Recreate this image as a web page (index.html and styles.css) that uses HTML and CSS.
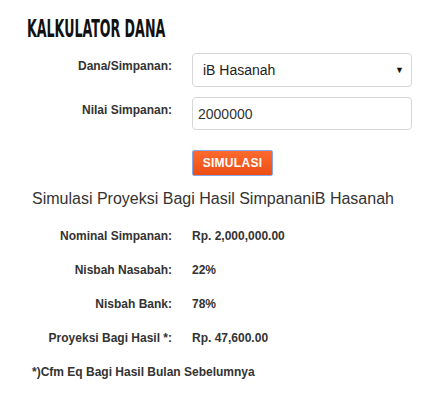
FILE: index.html
```html
<!DOCTYPE html>
<html lang="en">
<head>
  <meta charset="UTF-8">
  <title>Kalkulator Dana</title>
  <link rel="stylesheet" href="styles.css">
</head>
<body>

  <div class="kalkulator">
    <h2 class="judul"><span>KALKULATOR DANA</span></h2>

    <div class="form">
      <div class="form-row">
        <label class="form-label">Dana/Simpanan:</label>
        <div class="select-box">
          <span>iB Hasanah</span>
          <span class="arrow">&#9660;</span>
        </div>
      </div>

      <div class="form-row">
        <label class="form-label" for="nilai">Nilai Simpanan:</label>
        <input class="input-box" type="text" id="nilai" value="2000000">
      </div>

      <div class="form-row">
        <span></span>
        <div><button class="btn-simulasi">SIMULASI</button></div>
      </div>
    </div>

    <h3 class="hasil-title">Simulasi Proyeksi Bagi Hasil SimpananiB Hasanah</h3>

    <div class="hasil">
      <div class="hasil-label">Nominal Simpanan:</div>
      <div>Rp. 2,000,000.00</div>

      <div class="hasil-label">Nisbah Nasabah:</div>
      <div>22%</div>

      <div class="hasil-label">Nisbah Bank:</div>
      <div>78%</div>

      <div class="hasil-label">Proyeksi Bagi Hasil *:</div>
      <div>Rp. 47,600.00</div>
    </div>

    <p class="catatan">*)Cfm Eq Bagi Hasil Bulan Sebelumnya</p>
  </div>

</body>
</html>
```

FILE: styles.css
```css
body {
  margin: 0;
  background: #fff;
  font-family: "Liberation Sans", Arial, sans-serif;
  color: #333;
}

.kalkulator {
  width: 448px;
  padding-top: 16px;
}

.judul {
  margin: 0 0 10px 27px;
  font-family: "Liberation Sans Narrow", "DejaVu Sans Condensed", sans-serif;
  font-weight: bold;
  font-size: 24px;
  line-height: 27px;
  color: #111;
}

.judul span {
  display: inline-block;
  transform: scaleX(0.585);
  transform-origin: left center;
}

.form {
  display: flex;
  flex-direction: column;
  gap: 10px;
}

.form-row {
  display: grid;
  grid-template-columns: 172px 220px;
  column-gap: 20px;
}

.form-row:last-child {
  margin-top: 10px;
}

.form-label {
  text-align: right;
  font-size: 12px;
  font-weight: bold;
  line-height: 17px;
  padding-top: 5px;
}

.select-box {
  position: relative;
  box-sizing: border-box;
  height: 34px;
  padding: 0 7px 0 10px;
  display: flex;
  align-items: center;
  justify-content: space-between;
  border: 1px solid #d6d6d6;
  border-radius: 4px;
  font-size: 14px;
  color: #222;
}

.select-box .arrow {
  font-size: 9px;
  color: #111;
}

.input-box {
  box-sizing: border-box;
  width: 220px;
  height: 33px;
  padding: 0 5px;
  border: 1px solid #d6d6d6;
  border-radius: 4px;
  font-family: "Liberation Sans", Arial, sans-serif;
  font-size: 14px;
  color: #333;
}

.btn-simulasi {
  width: 81px;
  height: 26px;
  padding: 0;
  border: 1px solid #86a8e8;
  border-radius: 2px;
  background: linear-gradient(#ff6a2d, #eb4e15);
  color: #fff;
  font-family: "Liberation Sans", Arial, sans-serif;
  font-size: 12px;
  font-weight: bold;
  letter-spacing: 0.3px;
}

.hasil-title {
  margin: 13px 0 10px 32px;
  font-size: 16px;
  font-weight: normal;
  line-height: 20px;
  color: #333;
}

.hasil {
  display: grid;
  grid-template-columns: 140px 1fr;
  column-gap: 20px;
  margin-left: 32px;
  font-size: 12px;
  font-weight: bold;
  line-height: 34px;
}

.hasil-label {
  text-align: right;
}

.catatan {
  margin: 0 0 0 32px;
  font-size: 12px;
  font-weight: bold;
  line-height: 34px;
}
```
